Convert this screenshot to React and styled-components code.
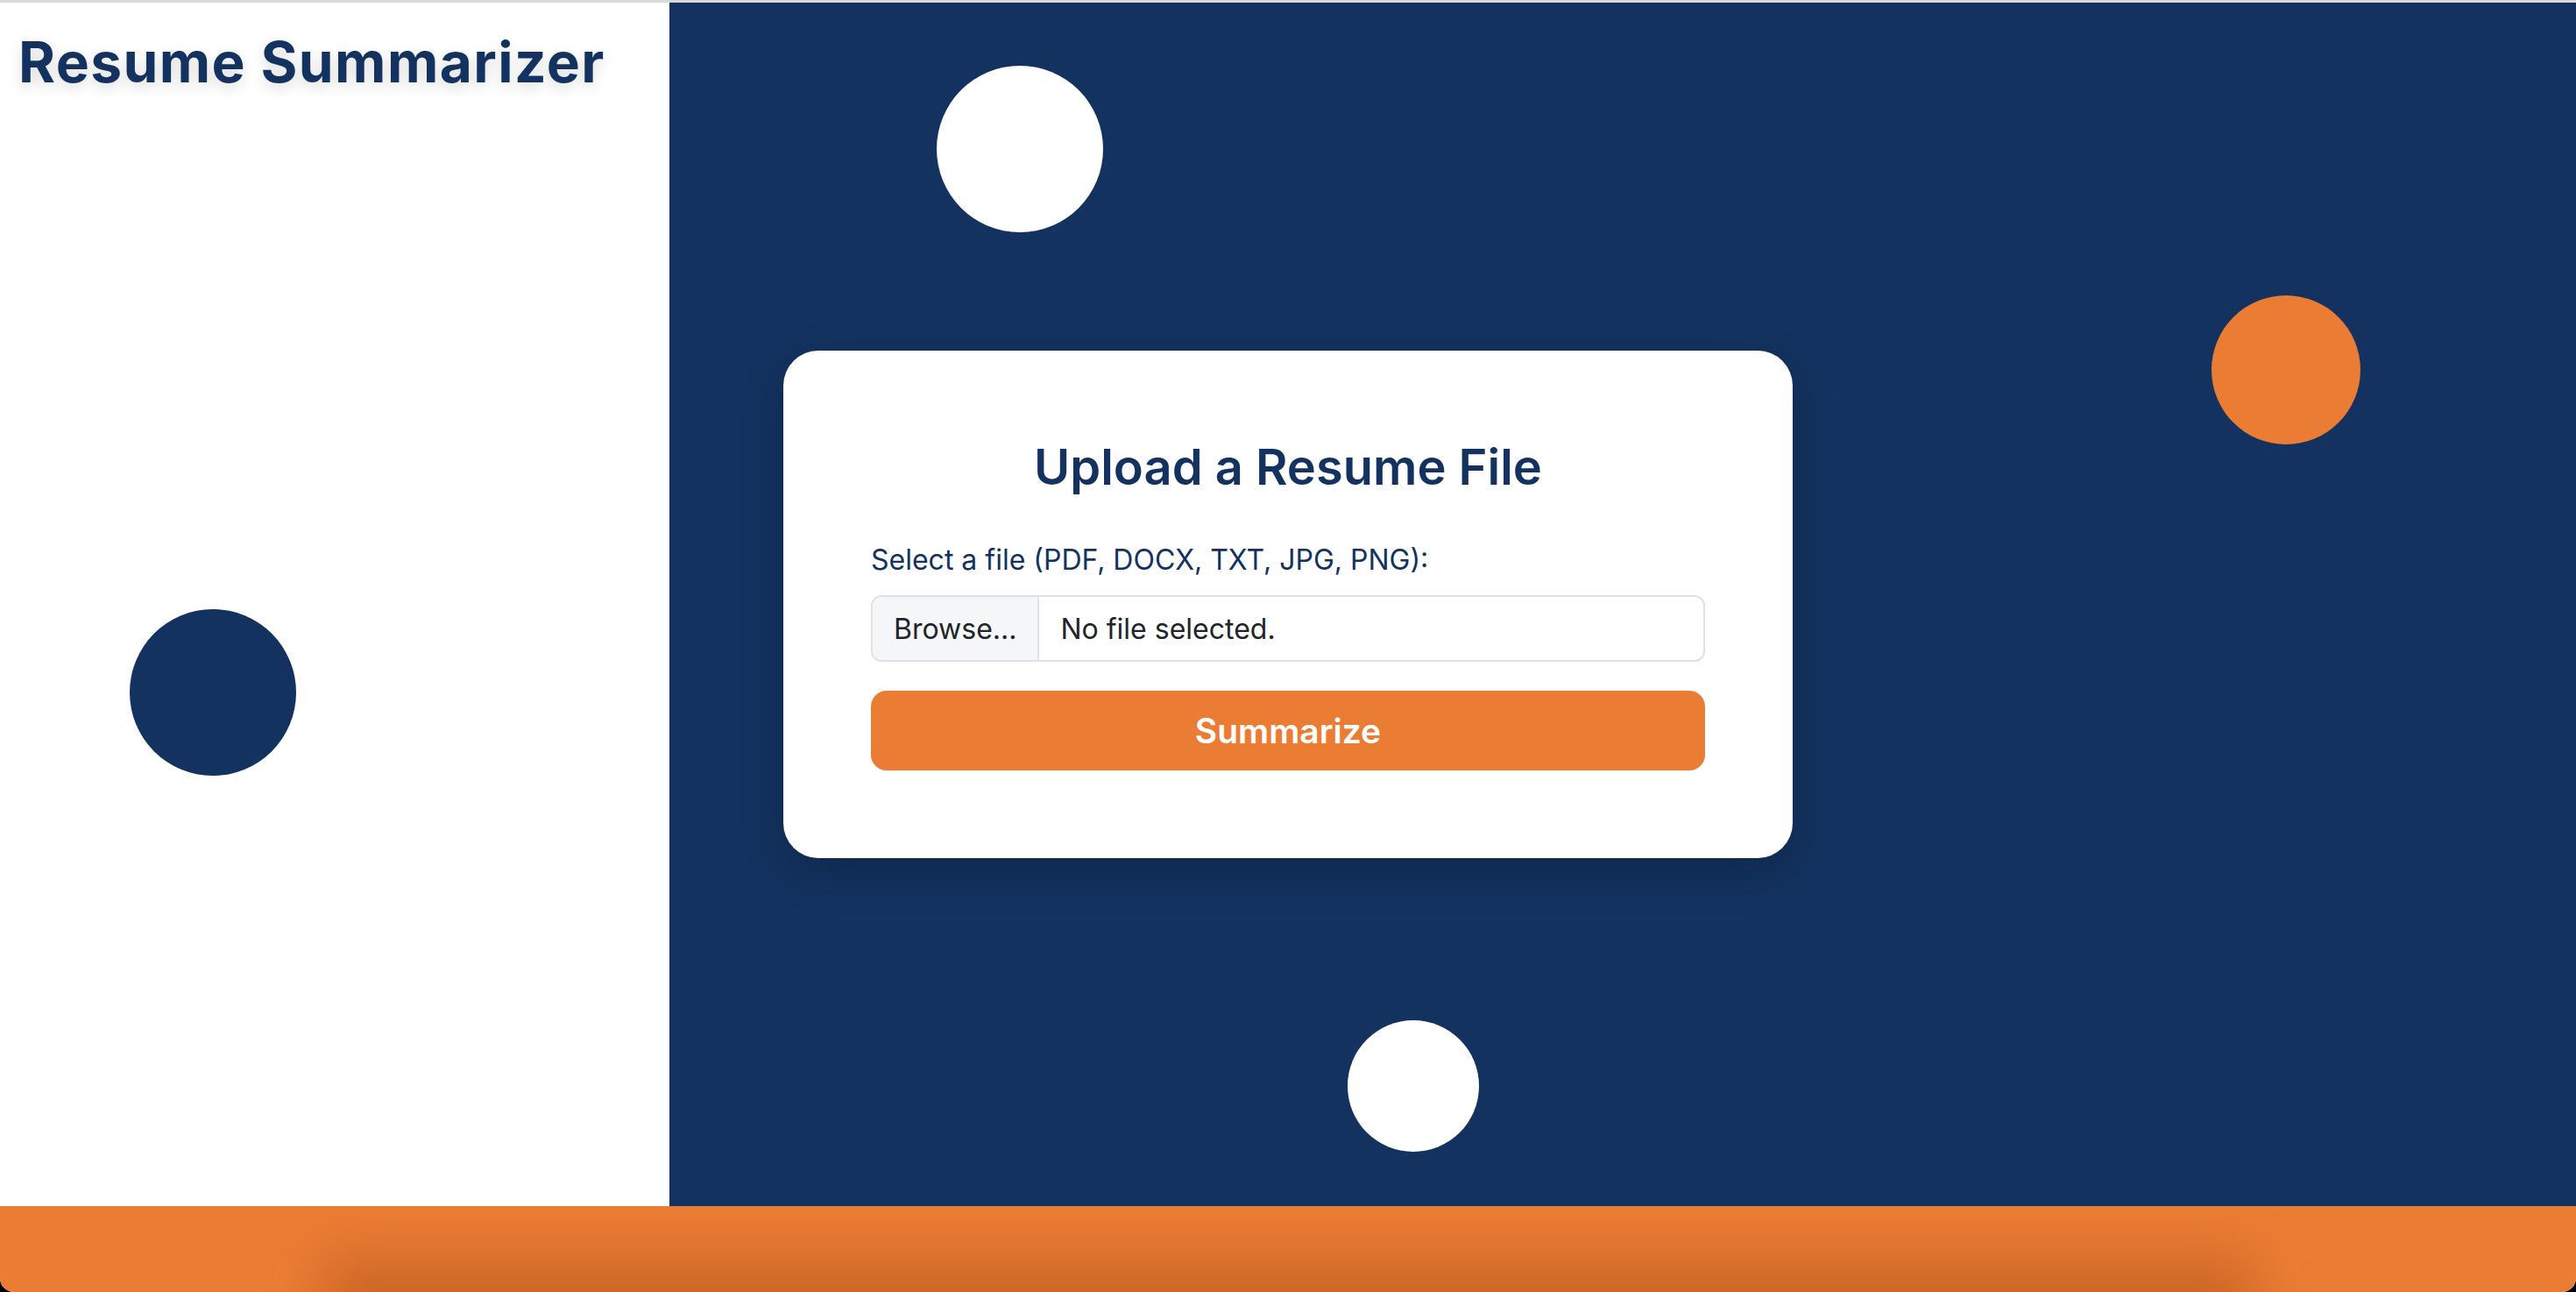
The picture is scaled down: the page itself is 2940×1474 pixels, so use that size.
import React from 'react';
import styled, { createGlobalStyle } from 'styled-components';

const navy = '#13325f';
const orange = '#eb7c34';

const GlobalStyle = createGlobalStyle`
  html, body {
    margin: 0;
    padding: 0;
    background: #000;
  }
  * {
    box-sizing: border-box;
  }
`;

const Page = styled.div`
  display: flex;
  flex-direction: column;
  height: 100vh;
  overflow: hidden;
  border-radius: 0 0 16px 16px;
  background: #fff;
  font-family: Inter, 'Noto Sans', sans-serif;
`;

const TopEdge = styled.div`
  height: 3px;
  background: #d9d9d9;
`;

const Main = styled.main`
  position: relative;
  flex: 1;
  display: grid;
  grid-template-columns: 764px 1fr;
`;

const Sidebar = styled.aside`
  background: #fff;
  padding: 30px 0 0 21px;
`;

const Title = styled.h1`
  margin: 0;
  font-size: 64px;
  line-height: 1.2;
  font-weight: 700;
  letter-spacing: 1.4px;
  color: ${navy};
  text-shadow: 0 6px 16px rgba(0, 0, 0, 0.14);
`;

const Stage = styled.section`
  background: ${navy};
  display: flex;
  align-items: center;
  padding-left: 130px;
`;

const Circle = styled.span`
  position: absolute;
  width: ${(p) => p.size}px;
  height: ${(p) => p.size}px;
  left: ${(p) => p.x - p.size / 2}px;
  top: ${(p) => p.y - p.size / 2 - 3}px;
  border-radius: 50%;
  background: ${(p) => p.color};
`;

const Card = styled.div`
  position: relative;
  z-index: 1;
  width: 1152px;
  padding: 100px;
  background: #fff;
  border-radius: 40px;
  box-shadow: 0 16px 50px rgba(0, 0, 0, 0.18);
`;

const Heading = styled.h2`
  margin: 0 0 48px;
  font-size: 56px;
  line-height: 1.2;
  font-weight: 600;
  text-align: center;
  color: ${navy};
`;

const Label = styled.label`
  display: block;
  margin-bottom: 16px;
  font-size: 32px;
  line-height: 48px;
  color: ${navy};
`;

const FileField = styled.label`
  display: flex;
  align-items: stretch;
  height: 76px;
  border: 2px solid #dee2e6;
  border-radius: 12px;
  overflow: hidden;
  font-size: 32px;
  color: #212529;
  background: #fff;
`;

const BrowseButton = styled.span`
  display: flex;
  align-items: center;
  padding: 0 24px;
  background: #f5f6f8;
  border-right: 2px solid #dee2e6;
`;

const FileName = styled.span`
  display: flex;
  align-items: center;
  padding-left: 24px;
`;

const SubmitButton = styled.button`
  display: block;
  width: 100%;
  height: 91px;
  margin-top: 33px;
  border: none;
  border-radius: 18px;
  background: ${orange};
  color: #fff;
  font-family: inherit;
  font-size: 39px;
  font-weight: 600;
  cursor: pointer;
`;

const Footer = styled.footer`
  position: relative;
  height: 98px;
  background: ${orange};
  overflow: hidden;
  &::after {
    content: '';
    position: absolute;
    left: 370px;
    right: 370px;
    top: 60px;
    bottom: -70px;
    background: rgba(130, 50, 0, 0.3);
    filter: blur(32px);
  }
`;

const circles = [
  { x: 1164, y: 170, size: 190, color: '#fff' },
  { x: 243, y: 790, size: 190, color: navy },
  { x: 2609, y: 422, size: 170, color: orange },
  { x: 1613, y: 1239, size: 150, color: '#fff' },
];

const App = () => (
  <>
    <GlobalStyle />
    <Page>
      <TopEdge />
      <Main>
        <Sidebar>
          <Title>Resume Summarizer</Title>
        </Sidebar>
        <Stage>
          <Card>
            <Heading>Upload a Resume File</Heading>
            <Label htmlFor="resume">Select a file (PDF, DOCX, TXT, JPG, PNG):</Label>
            <FileField id="resume">
              <BrowseButton>Browse...</BrowseButton>
              <FileName>No file selected.</FileName>
            </FileField>
            <SubmitButton type="button">Summarize</SubmitButton>
          </Card>
        </Stage>
        {circles.map((c, i) => (
          <Circle key={i} {...c} />
        ))}
      </Main>
      <Footer />
    </Page>
  </>
);

export default App;
